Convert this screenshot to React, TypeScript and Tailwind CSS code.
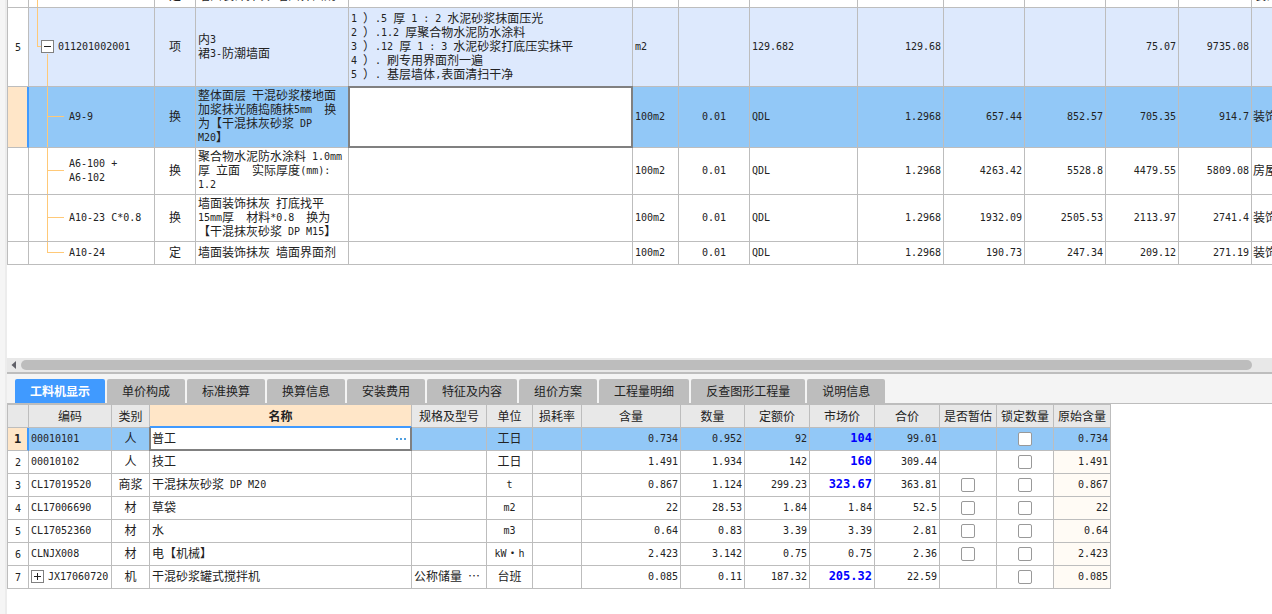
import { useState } from 'react'
import clsx from 'clsx'

type QuotaRow = {
  code: string
  kind: string
  name: string
  feature?: string
  unit: string
  content?: string
  expression: string
  values: string[]
  major: string
  height: string
  level: 'item' | 'child' | 'last'
}

type ResourceRow = {
  code: string
  kind: string
  name: string
  spec?: string
  unit: string
  values: string[]
  adjusted?: boolean
  estimate?: boolean
  original: string
  expandable?: boolean
}

const quotaRows: QuotaRow[] = [
  {
    code: '011201002001',
    kind: '项',
    name: '内3\n裙3-防潮墙面',
    feature:
      '1 ）.5 厚 1 : 2 水泥砂浆抹面压光\n2 ）.1.2 厚聚合物水泥防水涂料\n3 ）.12 厚 1 : 3 水泥砂浆打底压实抹平\n4 ）. 刷专用界面剂一遍\n5 ）. 基层墙体,表面清扫干净',
    unit: 'm2',
    expression: '129.682',
    values: ['129.68', '', '', '75.07', '9735.08'],
    major: '',
    height: 'h-[79px]',
    level: 'item',
  },
  {
    code: 'A9-9',
    kind: '换',
    name: '整体面层 干混砂浆楼地面\n加浆抹光随捣随抹5mm  换\n为【干混抹灰砂浆 DP\nM20】',
    unit: '100m2',
    content: '0.01',
    expression: 'QDL',
    values: ['1.2968', '657.44', '852.57', '705.35', '914.7'],
    major: '装饰',
    height: 'h-[61px]',
    level: 'child',
  },
  {
    code: 'A6-100 +\nA6-102',
    kind: '换',
    name: '聚合物水泥防水涂料 1.0mm\n厚 立面  实际厚度(mm):\n1.2',
    unit: '100m2',
    content: '0.01',
    expression: 'QDL',
    values: ['1.2968', '4263.42', '5528.8', '4479.55', '5809.08'],
    major: '房屋',
    height: 'h-[47px]',
    level: 'child',
  },
  {
    code: 'A10-23 C*0.8',
    kind: '换',
    name: '墙面装饰抹灰 打底找平\n15mm厚  材料*0.8  换为\n【干混抹灰砂浆 DP M15】',
    unit: '100m2',
    content: '0.01',
    expression: 'QDL',
    values: ['1.2968', '1932.09', '2505.53', '2113.97', '2741.4'],
    major: '装饰',
    height: 'h-[47px]',
    level: 'child',
  },
  {
    code: 'A10-24',
    kind: '定',
    name: '墙面装饰抹灰 墙面界面剂',
    unit: '100m2',
    content: '0.01',
    expression: 'QDL',
    values: ['1.2968', '190.73', '247.34', '209.12', '271.19'],
    major: '装饰',
    height: 'h-[23px]',
    level: 'last',
  },
]

const tabs = ['工料机显示', '单价构成', '标准换算', '换算信息', '安装费用', '特征及内容', '组价方案', '工程量明细', '反查图形工程量', '说明信息']

const resourceHeaders = ['编码', '类别', '名称', '规格及型号', '单位', '损耗率', '含量', '数量', '定额价', '市场价', '合价', '是否暂估', '锁定数量', '原始含量']

const resourceRows: ResourceRow[] = [
  { code: '00010101', kind: '人', name: '普工', unit: '工日', values: ['0.734', '0.952', '92', '104', '99.01'], adjusted: true, original: '0.734' },
  { code: '00010102', kind: '人', name: '技工', unit: '工日', values: ['1.491', '1.934', '142', '160', '309.44'], adjusted: true, original: '1.491' },
  { code: 'CL17019520', kind: '商浆', name: '干混抹灰砂浆 DP M20', unit: 't', values: ['0.867', '1.124', '299.23', '323.67', '363.81'], adjusted: true, estimate: true, original: '0.867' },
  { code: 'CL17006690', kind: '材', name: '草袋', unit: 'm2', values: ['22', '28.53', '1.84', '1.84', '52.5'], estimate: true, original: '22' },
  { code: 'CL17052360', kind: '材', name: '水', unit: 'm3', values: ['0.64', '0.83', '3.39', '3.39', '2.81'], estimate: true, original: '0.64' },
  { code: 'CLNJX008', kind: '材', name: '电【机械】', unit: 'kW·h', values: ['2.423', '3.142', '0.75', '0.75', '2.36'], estimate: true, original: '2.423' },
  { code: 'JX17060720', kind: '机', name: '干混砂浆罐式搅拌机', spec: '公称储量 …', unit: '台班', values: ['0.085', '0.11', '187.32', '205.32', '22.59'], adjusted: true, original: '0.085', expandable: true },
]

const line = 'border-r border-b border-[#bdbdbd] align-middle'
const cell = `${line} px-0.5 pb-0.5`

// Latin runs are half the width of a Chinese character
function Mixed({ text, bold }: { text: string; bold?: boolean }) {
  return (
    <span className="whitespace-pre">
      {text.split(/([\x20-\x7e]+)/).map((part, i) =>
        i % 2 ? (
          <span
            key={i}
            className={clsx(
              'align-[1px] font-["DejaVu_Sans_Mono",monospace] leading-none',
              bold ? 'text-xs font-bold' : 'text-[10px]',
            )}
          >
            {part}
          </span>
        ) : (
          part
        ),
      )}
    </span>
  )
}

function Toggle({ open, label }: { open: boolean; label: string }) {
  return (
    <button type="button" aria-label={label} className="block size-[13px] shrink-0 border border-[#808080] bg-white">
      <svg viewBox="0 0 11 11" className="size-[11px]" stroke="#222" shapeRendering="crispEdges">
        <path d={open ? 'M2 5.5h7' : 'M2 5.5h7M5.5 2v7'} />
      </svg>
    </button>
  )
}

function TreeCell({ row }: { row: QuotaRow }) {
  if (row.level === 'item') {
    return (
      <td className={clsx(cell, 'relative')}>
        <span className="absolute top-0 left-2 h-1/2 w-1 border-b border-l border-[#ffc978]" />
        <span className="absolute bottom-0 left-[18px] h-8 w-px bg-[#ffc978]" />
        <div className="flex items-center gap-1 pl-2.5">
          <Toggle open label={`折叠 ${row.code}`} />
          <Mixed text={row.code} />
        </div>
      </td>
    )
  }
  return (
    <td className={clsx(cell, 'relative')}>
      <span className="absolute top-0 left-[18px] h-1/2 w-[17px] border-b border-[#ffc978]" />
      <span className={clsx('absolute top-0 left-[18px] w-px bg-[#ffc978]', row.level === 'last' ? 'h-1/2' : 'h-full')} />
      <div className="pl-[38px]">
        <Mixed text={row.code} />
      </div>
    </td>
  )
}

function QuotaTable() {
  return (
    <table className="w-full table-fixed border-separate border-spacing-0 border-l border-[#bdbdbd]">
      <colgroup>
        <col className="w-[21px]" />
        <col className="w-[126px]" />
        <col className="w-[41px]" />
        <col className="w-[153px]" />
        <col className="w-[284px]" />
        <col className="w-[46px]" />
        <col className="w-[71px]" />
        <col className="w-[108px]" />
        <col className="w-[86px]" />
        <col className="w-[81px]" />
        <col className="w-[81px]" />
        <col className="w-[73px]" />
        <col className="w-[73px]" />
        <col />
      </colgroup>
      <tbody>
        <tr className="h-2">
          {['', '', '定', '墙面装饰抹灰 墙面界面剂', '', '', '', '', '', '', '', '', '', '装饰'].map((text, i) => (
            <td
              key={i}
              className={clsx('relative overflow-hidden border-b border-[#bdbdbd] px-0.5', i < 13 && 'border-r')}
            >
              {i === 1 && <span className="absolute inset-y-0 left-2 w-px bg-[#ffc978]" />}
              <div className={clsx('flex h-[7px] items-end pb-[5px]', i === 2 && 'justify-center')}>
                <Mixed text={text} />
              </div>
            </td>
          ))}
        </tr>
        {quotaRows.map((row, i) => {
          const current = i === 1
          return (
            <tr key={row.code} className={clsx(row.height, row.level === 'item' && 'bg-[#dde9fd]', current && 'bg-[#92c8f7]')}>
              <td
                className={clsx(
                  'border-b border-b-[#bdbdbd] text-center',
                  current ? 'border-r-2 border-r-[#409aff] bg-[#ffe6c8]' : 'border-r border-r-[#bdbdbd] bg-white',
                )}
              >
                <Mixed text={i === 0 ? '5' : ''} />
              </td>
              <TreeCell row={row} />
              <td className={clsx(cell, 'text-center')}>{row.kind}</td>
              <td className={cell}>
                <Mixed text={row.name} />
              </td>
              <td className={clsx(cell, 'relative')}>
                {current ? (
                  <textarea
                    aria-label="项目特征"
                    className="absolute -inset-px block resize-none border-2 border-[#808080] bg-white p-0.5 outline-none"
                  />
                ) : (
                  <Mixed text={row.feature ?? ''} />
                )}
              </td>
              <td className={cell}>
                <Mixed text={row.unit} />
              </td>
              <td className={clsx(cell, 'text-center')}>
                <Mixed text={row.content ?? ''} />
              </td>
              <td className={cell}>
                <Mixed text={row.expression} />
              </td>
              {row.values.map((value, n) => (
                <td key={n} className={clsx(cell, 'text-right')}>
                  <Mixed text={value} />
                </td>
              ))}
              <td className="overflow-hidden border-b border-[#bdbdbd] pb-0.5 pl-px align-middle">
                <Mixed text={row.major} />
              </td>
            </tr>
          )
        })}
      </tbody>
    </table>
  )
}

function Check({ label }: { label: string }) {
  return (
    <input
      type="checkbox"
      aria-label={label}
      className="mx-auto block size-3.5 appearance-none rounded-xs border border-[#999] bg-white checked:bg-[#409aff]"
    />
  )
}

function ResourceTable() {
  return (
    <table className="w-px table-fixed border-separate border-spacing-0 border-t border-l border-[#bdbdbd]">
      <colgroup>
        <col className="w-[21px]" />
        <col className="w-[83px]" />
        <col className="w-[38px]" />
        <col className="w-[262px]" />
        <col className="w-[75px]" />
        <col className="w-[46px]" />
        <col className="w-[49px]" />
        <col className="w-[99px]" />
        <col className="w-16" />
        <col className="w-[65px]" />
        <col className="w-[65px]" />
        <col className="w-[65px]" />
        <col className="w-[57px]" />
        <col className="w-[57px]" />
        <col className="w-[57px]" />
      </colgroup>
      <thead>
        <tr className="h-[23px] bg-[#e8e8e8]">
          <td className={line} />
          {resourceHeaders.map((title) => (
            <th
              key={title}
              className={clsx(
                'border-r border-r-[#bdbdbd] text-center whitespace-nowrap',
                title === '名称' ? 'border-b-2 border-b-[#409aff] bg-[#ffe6c8] font-bold' : 'border-b border-b-[#bdbdbd] font-normal',
              )}
            >
              {title}
            </th>
          ))}
        </tr>
      </thead>
      <tbody>
        {resourceRows.map((row, i) => {
          const current = i === 0
          return (
            <tr key={row.code} className={clsx('h-[23px]', current && 'bg-[#92c8f7]')}>
              <td
                className={clsx(
                  'border-b border-b-[#bdbdbd] text-center',
                  current ? 'border-r-2 border-r-[#409aff] bg-[#ffe6c8]' : 'border-r border-r-[#bdbdbd] bg-white',
                )}
              >
                <Mixed text={String(i + 1)} bold={current} />
              </td>
              <td className={cell}>
                <div className="flex items-center gap-1">
                  {row.expandable && <Toggle open={false} label={`展开 ${row.code}`} />}
                  <Mixed text={row.code} />
                </div>
              </td>
              <td className={clsx(cell, 'text-center')}>{row.kind}</td>
              {current ? (
                <td className={clsx(cell, 'relative')}>
                  <div className="absolute -inset-px flex items-center border-2 border-t border-[#808080] border-t-[#409aff] bg-white">
                    <input aria-label="名称" defaultValue={row.name} className="min-w-0 flex-1 pb-0.5 pl-px outline-none" />
                    <button type="button" aria-label="选择" className="flex gap-0.5 pr-1">
                      <span className="size-0.5 bg-[#4f9fe0]" />
                      <span className="size-0.5 bg-[#4f9fe0]" />
                      <span className="size-0.5 bg-[#4f9fe0]" />
                    </button>
                  </div>
                </td>
              ) : (
                <td className={cell}>
                  <Mixed text={row.name} />
                </td>
              )}
              <td className={cell}>
                <Mixed text={row.spec ?? ''} />
              </td>
              <td className={clsx(cell, 'text-center')}>
                <Mixed text={row.unit} />
              </td>
              <td className={cell} />
              {row.values.map((value, n) => {
                const changed = n === 3 && row.adjusted
                return (
                  <td key={n} className={clsx(cell, 'text-right', changed && 'text-[#0000ff]')}>
                    <Mixed text={value} bold={changed} />
                  </td>
                )
              })}
              <td className={line}>{row.estimate && <Check label={`是否暂估 ${row.code}`} />}</td>
              <td className={line}>
                <Check label={`锁定数量 ${row.code}`} />
              </td>
              <td className={clsx(cell, 'text-right', !current && 'bg-[#fffbf5]')}>
                <Mixed text={row.original} />
              </td>
            </tr>
          )
        })}
      </tbody>
    </table>
  )
}

export default function App() {
  const [active, setActive] = useState(tabs[0])

  return (
    <div className="flex h-screen overflow-hidden bg-white font-['Noto_Sans_CJK_SC',sans-serif] text-xs leading-[14px] text-[#222]">
      <div className="w-[7px] shrink-0 border-r-2 border-[#ececec] bg-[#f5f5f5]" />
      <main className="flex min-w-0 flex-1 flex-col">
        <section className="min-h-0 flex-1 overflow-hidden">
          <QuotaTable />
        </section>

        <div className="flex h-3.5 shrink-0 items-center bg-[#e8e8e8] pr-5">
          <button type="button" aria-label="向左滚动" className="w-3.5 pl-1">
            <svg viewBox="0 0 6 8" className="h-2 w-1.5" fill="#606068">
              <path d="M5 0v8L0.5 4z" />
            </svg>
          </button>
          <div className="h-2.5 flex-1 rounded-full bg-[#bdbdbd]" />
        </div>

        <section className="h-[242px] shrink-0 border-t-2 border-[#bdbdbd]">
          <div role="tablist" className="flex h-[30px] gap-0.5 border-b border-[#bdbdbd] bg-[#f4f4f4] pt-[5px] pl-2">
            {tabs.map((tab) => (
              <button
                key={tab}
                type="button"
                role="tab"
                aria-selected={tab === active}
                onClick={() => setActive(tab)}
                className={clsx(
                  'rounded-t-xs px-[15px] whitespace-nowrap',
                  tab === active ? 'bg-[#409aff] font-bold text-white' : 'bg-[#bdbdbd]',
                )}
              >
                {tab}
              </button>
            ))}
          </div>
          <ResourceTable />
        </section>
      </main>
    </div>
  )
}
